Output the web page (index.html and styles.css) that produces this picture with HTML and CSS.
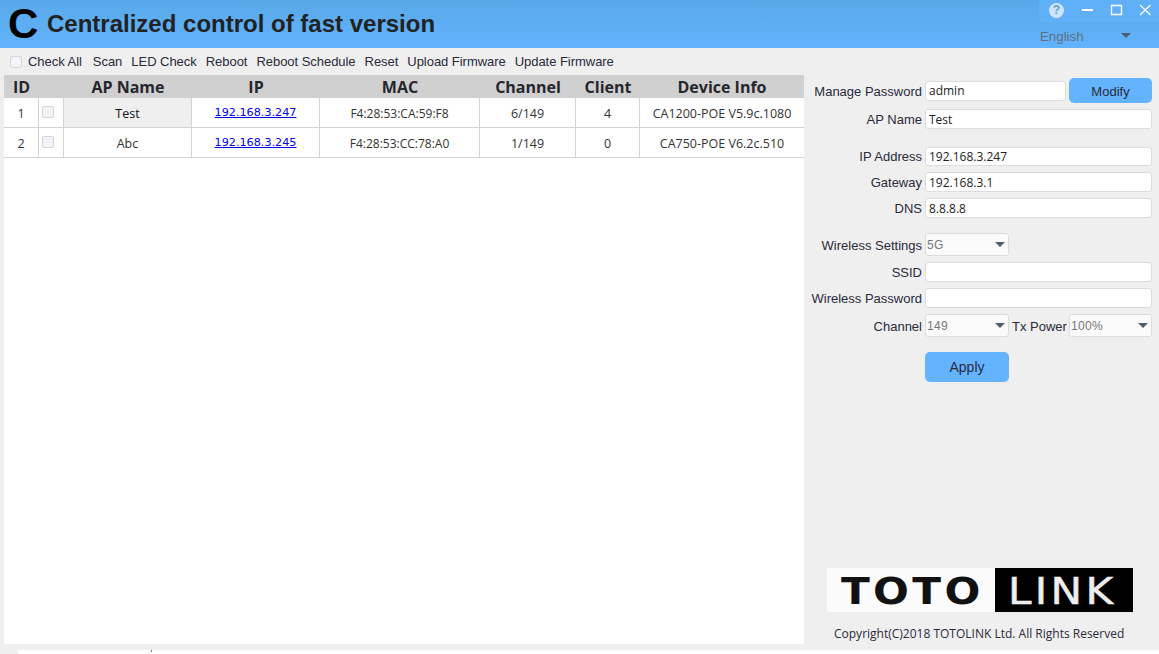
FILE: index.html
```html
<!DOCTYPE html>
<html lang="en">
<head>
<meta charset="utf-8">
<title>Centralized control of fast version</title>
<link rel="stylesheet" href="styles.css">
</head>
<body>
<div class="app">
  <header class="top">
    <span class="mark">C</span>
    <h1 class="title">Centralized control of fast version</h1>
    <div class="top-right">
      <div class="winbar">
        <span class="help">?</span>
        <svg class="wicon" width="14" height="14" viewBox="0 0 14 14"><path d="M2 7h11" stroke="#fff" stroke-width="2"/></svg>
        <svg class="wicon" width="14" height="14" viewBox="0 0 14 14"><path d="M2.500 2.500h10v9h-10z" fill="none" stroke="#fff" stroke-width="1.400"/></svg>
        <svg class="wicon" width="14" height="14" viewBox="0 0 14 14"><path d="M2 2l10.500 10M12.500 2L2 12" stroke="#fff" stroke-width="1.200"/></svg>
      </div>
      <div class="lang"><span>English</span><i class="lang-arrow"></i></div>
    </div>
  </header>
  <nav class="toolbar">
    <label class="check-all"><span class="box"></span>Check All</label>
    <a>Scan</a><a>LED Check</a><a>Reboot</a><a>Reboot Schedule</a><a>Reset</a><a>Upload Firmware</a><a>Update Firmware</a>
  </nav>
  <main class="main">
    <section class="list">
      <table class="grid">
        <colgroup>
          <col class="c-id"><col class="c-ck"><col class="c-name"><col class="c-ip"><col class="c-mac"><col class="c-ch"><col class="c-cl"><col class="c-info">
        </colgroup>
        <thead>
          <tr><th>ID</th><th></th><th>AP Name</th><th>IP</th><th>MAC</th><th>Channel</th><th>Client</th><th>Device Info</th></tr>
        </thead>
        <tbody>
          <tr><td>1</td><td class="ck"><span class="box box-row"></span></td><td class="sel-name">Test</td><td><a class="ip">192.168.3.247</a></td><td class="mac">F4:28:53:CA:59:F8</td><td>6/149</td><td>4</td><td>CA1200-POE V5.9c.1080</td></tr>
          <tr><td>2</td><td class="ck"><span class="box box-row"></span></td><td>Abc</td><td><a class="ip">192.168.3.245</a></td><td class="mac">F4:28:53:CC:78:A0</td><td>1/149</td><td>0</td><td>CA750-POE V6.2c.510</td></tr>
        </tbody>
      </table>
    </section>
    <aside class="side">
      <div class="row row-first"><label>Manage Password</label><input class="field" value="admin"><button class="btn btn-modify">Modify</button></div>
      <div class="row row-a"><label>AP Name</label><input class="field" value="Test"></div>
      <div class="row row-b"><label>IP Address</label><input class="field" value="192.168.3.247"></div>
      <div class="row row-c"><label>Gateway</label><input class="field" value="192.168.3.1"></div>
      <div class="row row-d"><label>DNS</label><input class="field" value="8.8.8.8"></div>
      <div class="row row-e tall"><label>Wireless Settings</label><div class="select short"><span>5G</span></div></div>
      <div class="row row-f"><label>SSID</label><input class="field"></div>
      <div class="row row-d"><label>Wireless Password</label><input class="field"></div>
      <div class="row row-d tall"><label>Channel</label><div class="select short"><span>149</span></div><label class="tx">Tx Power</label><div class="select"><span>100%</span></div></div>
      <div class="row row-g"><label></label><button class="btn btn-apply">Apply</button></div>
      <div class="logo"><span class="logo-a"><span class="logo-text">TOTO</span></span><span class="logo-b"><span class="logo-text">LINK</span></span></div>
      <p class="copy">Copyright(C)2018 TOTOLINK Ltd. All Rights Reserved</p>
    </aside>
  </main>
  <div class="edge"><span class="edge-a"></span><span class="edge-b"></span></div>
</div>
</body>
</html>
```
FILE: styles.css
```css
* { box-sizing: border-box; }
html, body { margin: 0; padding: 0; height: 100%; overflow: hidden; }
body { background: #fff; font-family: "Liberation Sans", Arial, sans-serif; color: #2a2a3a; }
.app { width: 1159px; height: 654px; display: flex; flex-direction: column; background: #efefef; }

.top { height: 48px; flex: none; display: flex; align-items: flex-start; background: linear-gradient(180deg, #58a8e8 0%, #62b3fe 100%); }
.mark { width: 39px; margin-left: 8px; font-size: 42px; line-height: 47px; font-weight: 700; color: #000; }
.title { margin: 0; font-size: 24px; line-height: 48px; font-weight: 700; color: #222; }
.top-right { margin-left: auto; width: 120px; display: flex; flex-direction: column; }
.winbar { height: 22px; padding-bottom: 2px; display: flex; align-items: center; background: #5fb0f7; }
.help { width: 15px; height: 15px; margin-left: 10px; border-radius: 50%; background: #cfe5fb; color: #5d9fe0; font-size: 12px; font-weight: 700; line-height: 15px; text-align: center; }
.wicon { margin-left: 15px; }
.help + .wicon { margin-left: 16px; }
.lang { height: 26px; display: flex; align-items: center; padding: 2px 0 0 1px; color: #5e6f80; font-size: 13.300px; }
.lang-arrow { margin: -2px 0 0 37px; width: 0; height: 0; border-left: 5px solid transparent; border-right: 5px solid transparent; border-top: 5px solid #4f6070; }

.toolbar { height: 27px; flex: none; display: flex; align-items: center; gap: 9px; padding: 0 0 0 10px; font-size: 13px; letter-spacing: -0.04px; color: #2a2a3a; }
.check-all { display: flex; align-items: center; margin-right: 2px; }
.box { display: inline-block; width: 12px; height: 12px; border: 1px solid #d4d6da; border-radius: 2px; background: #f3f4f7; margin-right: 6px; }
.box-row { margin: 0; vertical-align: middle; position: relative; top: -3px; }

.main { flex: 1; min-height: 0; display: flex; padding-bottom: 6px; }
.list { flex: none; width: 800px; margin-left: 4px; background: #fff; }
.grid { width: 800px; table-layout: fixed; border-collapse: separate; border-spacing: 0; font-family: "Open Sans", sans-serif; font-size: 12.500px; color: #333; }
.c-id { width: 35px; } .c-ck { width: 25px; } .c-name { width: 128px; } .c-ip { width: 128px; }
.c-mac { width: 160px; } .c-ch { width: 96px; } .c-cl { width: 64px; } .c-info { width: 164px; }
.grid th { height: 23px; padding: 1px 0 0; background: #d0d0d0; font-size: 16px; line-height: 22px; font-weight: 700; color: #26262e; }
.grid td { height: 30px; padding: 2px 0 0; text-align: center; border-right: 1px solid #d4d4d4; border-bottom: 1px solid #d4d4d4; }
.grid td:last-child { border-right: 0; }
.grid td.ck { text-align: left; padding-left: 3px; }
.grid td.mac { font-size: 12px; }
.sel-name { background: #efefef; color: #111; }
.ip { font-family: "DejaVu Sans", sans-serif; font-size: 11.200px; color: #00e; text-decoration: underline; position: relative; top: -2px; }

.side { flex: 1; min-width: 0; padding: 3px 7px 0 0; display: flex; flex-direction: column; }
.row { display: flex; align-items: center; height: 20px; font-size: 13px; }
.row label { flex: none; width: 118px; margin-right: 3px; text-align: right; color: #2a2a3a; white-space: nowrap; }
.row-first { height: 25px; }
.row-first label { padding-top: 1px; }
.row-a { margin-top: 6px; }
.row-b { margin-top: 18px; height: 19px; }
.row-c { margin-top: 6px; }
.row-d { margin-top: 6px; }
.row-e { margin-top: 15px; }
.row-f { margin-top: 6px; }
.row-g { margin-top: 15px; height: 30px; }
.tall { height: 23px; }
.tall label, .tall .select span { padding-top: 1px; }
.field { flex: 1; min-width: 0; height: 100%; padding: 0 3px; border: 1px solid #dcdcdc; border-radius: 3px; background: #fff; font: 12px "Open Sans", sans-serif; color: #222; outline: none; }
.row-first .field { height: 20px; }
.btn { border: 0; border-radius: 5px; background: #63b3ff; color: #2a2a3a; font: 13px "Liberation Sans", Arial, sans-serif; }
.btn-modify { flex: none; width: 83px; height: 25px; margin-left: 3px; padding: 1px 0 0; }
.btn-apply { flex: none; width: 84px; height: 30px; font-size: 14px; }
.select { position: relative; flex: 1; height: 23px; padding-left: 1px; display: flex; align-items: center; border: 1px solid #dcdcdc; border-radius: 3px; background: #fafafa; font-size: 12px; color: #777; letter-spacing: 0.3px; }
.select::after { content: ""; position: absolute; right: 3px; top: 8px; width: 0; height: 0; border-left: 5px solid transparent; border-right: 5px solid transparent; border-top: 5px solid #4f5f68; }
.select.short { flex: none; width: 84px; }
.row label.tx { width: 54px; margin: 0 3px; }

.logo { margin: auto 0 0 23px; width: 306px; height: 44px; display: flex; background: #fbfbfb; flex: none; }
.logo-a, .logo-b { font-family: "DejaVu Sans", sans-serif; font-size: 38px; line-height: 46px; letter-spacing: 3px; white-space: nowrap; }
.logo-a { width: 168px; padding-left: 14px; color: #111; font-weight: 700; }
.logo-b { width: 138px; padding-left: 13px; background: #000; color: #eee; font-weight: 400; -webkit-text-stroke: 0.5px #eee; }
.logo-text { display: inline-block; transform-origin: left center; transform: scaleX(1.110); }
.copy { margin: 14px 0 2px 30px; font: 12px/16px "Open Sans", sans-serif; white-space: nowrap; color: #2a2a3a; }

.edge { height: 4px; flex: none; display: flex; background: #fff; }
.edge-a { width: 18px; background: #efefef; }
.edge-b { width: 1px; height: 2px; margin-left: 133px; background: #777; }
```
